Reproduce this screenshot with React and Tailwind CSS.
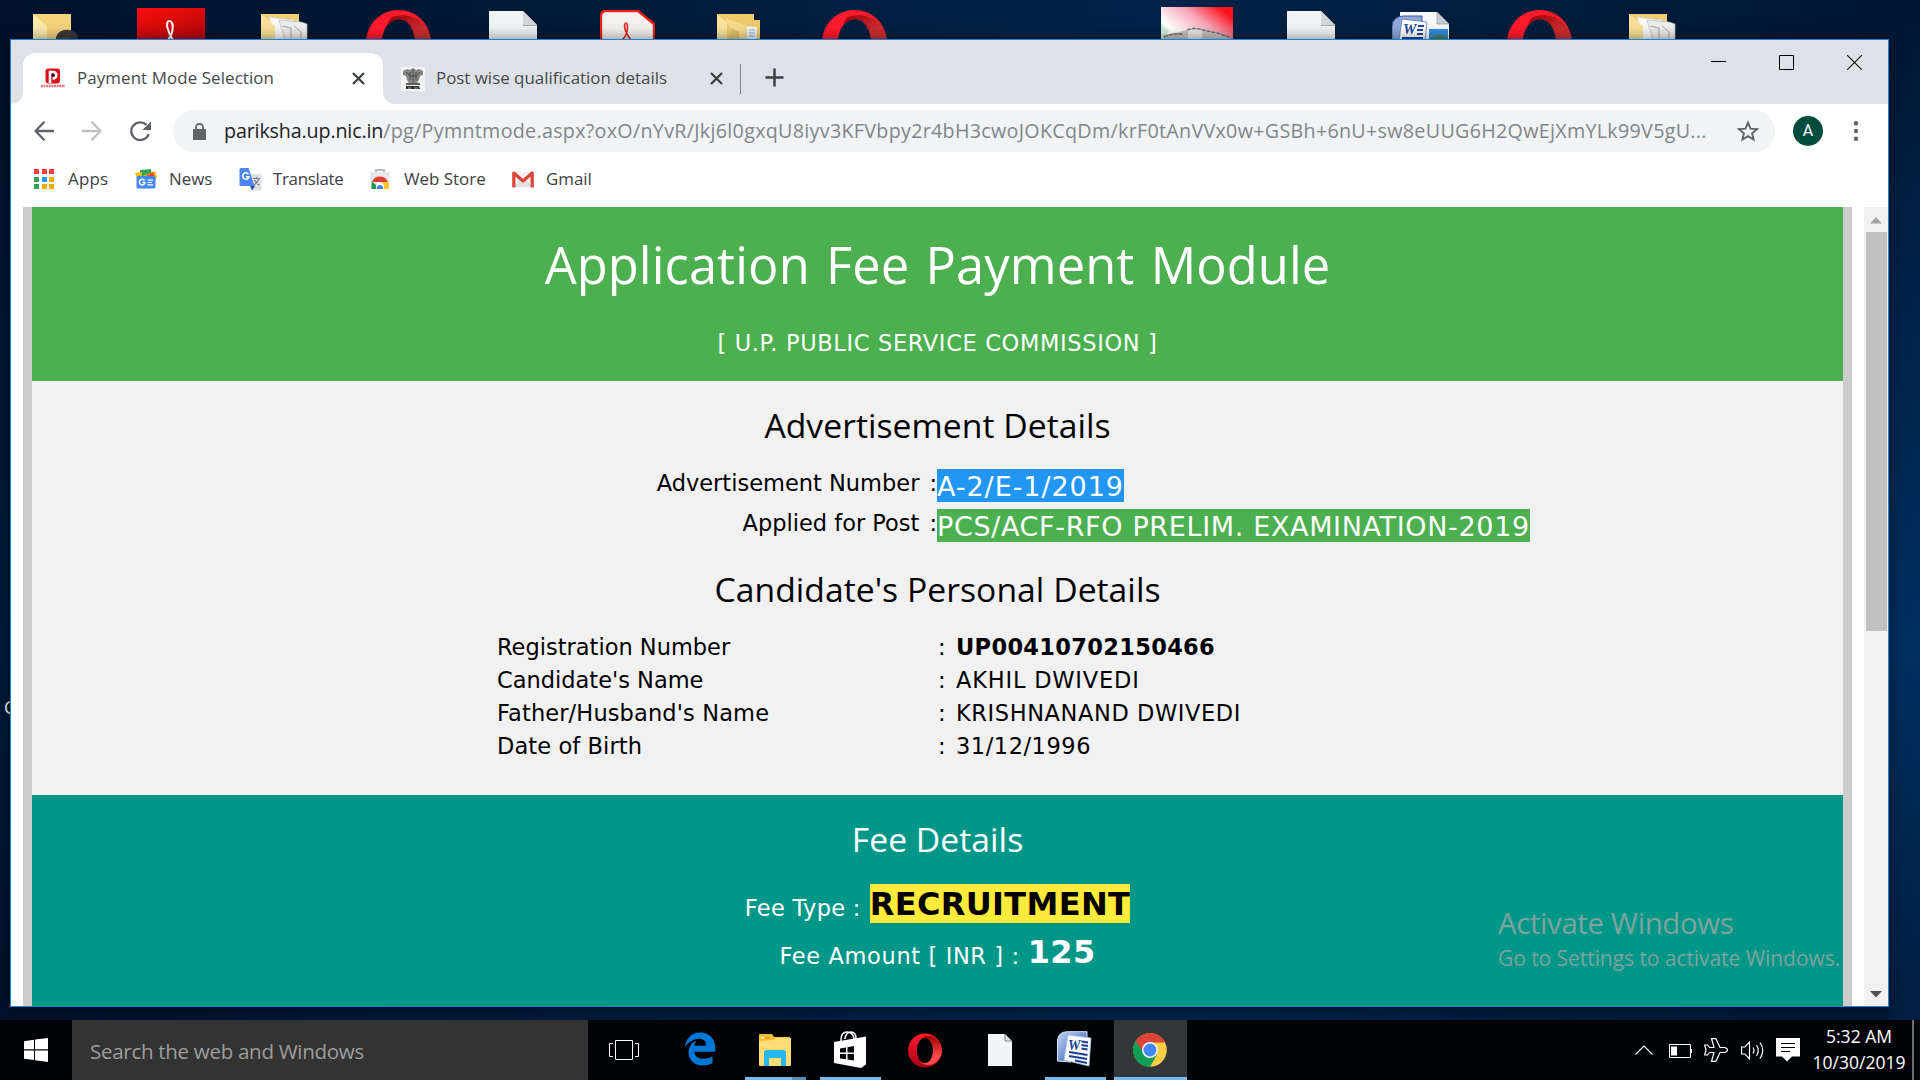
import React from "react";
import { FaEdgeLegacy } from "react-icons/fa6";

/* ---------- Desktop icons ---------- */

function OperaTop() {
  return (
    <svg width="66" height="30" viewBox="0 0 66 30">
      <defs>
        <linearGradient id="opIn" x1="0" x2="1" y1="0" y2="1">
          <stop offset="0" stopColor="#9c0000" />
          <stop offset="0.6" stopColor="#c92a2c" />
          <stop offset="1" stopColor="#d03434" />
        </linearGradient>
      </defs>
      <path d="M0 30C2 12 16 0 32.5 0S63 12 65 30H49C48 18 42 9 33 9S17 18 16 30z" fill="#ff1b2d" />
      <path d="M26 7C40 2 62 8 65 30H49C48 18 42 9 33 9C28 9 24 12 21 16C22 12 23 9 26 7z" fill="url(#opIn)" />
    </svg>
  );
}

function DocTop() {
  return (
    <svg width="48" height="30" viewBox="0 0 48 30">
      <path d="M0 0H34L48 14V30H0z" fill="#f2f3f4" />
      <path d="M34 0V14H48z" fill="#d3d5d8" />
      <path d="M34 14H48V15H34z" fill="#a9abad" />
    </svg>
  );
}

function FolderPapers() {
  return (
    <svg width="47" height="26" viewBox="0 0 47 26">
      <path d="M0 0H38V26H0z" fill="#f3cf73" />
      <path d="M8 3L33 6V26H12z" fill="#fafafa" stroke="#c9c9c9" strokeWidth=".7" />
      <path d="M18 6L40 8L46 10V26H24z" fill="#eeeeee" stroke="#bcbcbc" strokeWidth=".7" />
      <path d="M22 12L30 14V26M33 12L40 18V26" fill="none" stroke="#a5a5a5" />
      <path d="M0 0L14 12V26H0z" fill="#fbe29a" />
    </svg>
  );
}

function FolderUser() {
  return (
    <svg width="46" height="26" viewBox="0 0 46 26">
      <path d="M0 0H38V26H0z" fill="#f3d37c" />
      <path d="M0 0L14 12V26H0z" fill="#fdeaad" />
      <path d="M23 24C24 18 30 15 36 16S45 20 45 25H23z" fill="#3a3a3a" />
      <path d="M25 23L38 23L36 26H25z" fill="#5b4427" />
    </svg>
  );
}

function FolderOpen() {
  return (
    <svg width="44" height="26" viewBox="0 0 44 26">
      <path d="M0 0H37V6H43V26H0z" fill="#f0cb6b" />
      <path d="M30 12L40 13V26H30z" fill="#f1f3f5" />
      <path d="M32 16H38M32 19H38M32 22H38" stroke="#8fb1d1" />
      <path d="M0 1L10 8V26H0z" fill="#fbe4a0" />
      <path d="M8 4L30 12V26H22L14 16z" fill="#f7dc8d" />
      <path d="M14 14L22 18V26H14z" fill="#e3c468" />
    </svg>
  );
}

function AcrobatRed() {
  return (
    <svg width="68" height="32" viewBox="0 0 68 32">
      <defs>
        <linearGradient id="acr" x2="0.7" y2="1">
          <stop offset="0" stopColor="#fb0e0e" />
          <stop offset="1" stopColor="#b80707" />
        </linearGradient>
      </defs>
      <path d="M0 0H68V32H0z" fill="url(#acr)" />
      <path d="M31 32C37 25 37 13 32.5 13C28 13 30 23 36 32" fill="none" stroke="#fff" strokeWidth="2" />
    </svg>
  );
}

function PdfTop() {
  return (
    <svg width="55" height="30" viewBox="0 0 55 30">
      <path d="M1 30V6Q1 1 6 1H38L54 14V30" fill="#f4f2f1" stroke="#f02015" strokeWidth="2.4" />
      <path d="M22 30C29 24 28 13 26 13S23 20 31 30" fill="none" stroke="#e8261c" strokeWidth="1.6" />
    </svg>
  );
}

function PhotoTop() {
  return (
    <svg width="72" height="33" viewBox="0 0 72 33">
      <defs>
        <linearGradient id="pho" x1="0" y1=".6" x2="1" y2="0">
          <stop offset="0.1" stopColor="#ffffff" />
          <stop offset="0.5" stopColor="#f7a3b4" />
          <stop offset="0.85" stopColor="#fb1420" />
        </linearGradient>
      </defs>
      <path d="M0 0H72V33H0z" fill="url(#pho)" />
      <path d="M0 16L8 24L2 33H0z" fill="#d3efd9" />
      <path d="M2 33V28L14 26L26 23Q34 20 42 23L56 26L70 31V33z" fill="#c4c4c4" />
      <path d="M27 24Q34 20 41 24V33H27z" fill="#e9e9e9" />
      <path d="M3 30L12 27L22 27M26 23Q34 20 42 23L56 26L70 31" fill="none" stroke="#6a6a6a" strokeWidth="1.300" strokeDasharray="4 1" />
    </svg>
  );
}

function WordTop() {
  return (
    <svg width="58" height="28" viewBox="0 0 58 28">
      <path d="M8 0H45L57 12V28H8z" fill="#f7f9fb" />
      <path d="M45 0V12H57z" fill="#c9cdd3" stroke="#8f959c" strokeWidth=".7" />
      <path d="M37 17H56V28H37z" fill="#2f8fe0" />
      <path d="M37 28Q44 20 56 25V28z" fill="#4f8351" />
      <path d="M0 28V14Q1 4 12 4H30V28z" fill="#8ea9d8" stroke="#3c5c9e" strokeWidth="1" />
      <path d="M10 7L35 10L33 28H7z" fill="#fff" stroke="#5d7fc0" strokeWidth=".8" />
      <text x="11" y="22" fontFamily="Liberation Serif" fontStyle="italic" fontWeight="700" fontSize="15" fill="#1d4a9c">W</text>
      <path d="M26 14H32M25 18H31M25 22H31M10 26H31" stroke="#1d4a9c" strokeWidth="2" />
    </svg>
  );
}

/* ---------- Browser icons ---------- */

function TabClose() {
  return (
    <svg width="13" height="13" viewBox="0 0 13 13">
      <path d="M1 1L12 12M12 1L1 12" stroke="#3c4043" strokeWidth="2.3" />
    </svg>
  );
}

function ParikshaIcon() {
  return (
    <svg width="24" height="24" viewBox="0 0 24 24">
      <rect x="4.5" y=".5" width="14.5" height="15" rx="3" fill="#d9121c" />
      <path d="M9 15V4H12.500A3.300 3.300 0 0 1 12.500 10.500H11.500" fill="none" stroke="#fff" strokeWidth="2.600" />
      <circle cx="12" cy="7.200" r="1.600" fill="#222" />
      <path d="M0 18H24" stroke="#e0757a" strokeWidth="2.400" strokeDasharray="2 .6" />
    </svg>
  );
}

function EmblemIcon() {
  return (
    <svg width="24" height="24" viewBox="0 0 24 24">
      <path d="M0 0H24V24H0z" fill="#f4f4f4" />
      <path d="M2 4L6 2L9 3L12 1L15 3L18 2L22 4L22 8L19 9L18 13L16 16H8L6 13L5 9L2 8z" fill="#858585" />
      <path d="M5 5L8 8M19 5L16 8M12 2V15M9 5V13M15 5V13M8 9H16" stroke="#4a4a4a" strokeWidth="1" />
      <path d="M5 16H19V18H5z" fill="#5b5b5b" />
      <path d="M5 19H18L19 22H5z" fill="#2c2c2c" />
      <path d="M7 21H10M13 21H17" stroke="#aaa" strokeWidth="1" />
    </svg>
  );
}

function AppsIcon() {
  const colors = ["bg-[#f44336]", "bg-[#f44336]", "bg-[#f44336]", "bg-[#34a058]", "bg-[#2196f3]", "bg-[#fbaa00]", "bg-[#34a058]", "bg-[#fbaa00]", "bg-[#fbaa00]"];
  return (
    <div className="grid h-5 w-5 grid-cols-3 gap-[2.500px]">
      {colors.map((c, i) => (
        <span key={i} className={c} />
      ))}
    </div>
  );
}

function NewsIcon() {
  return (
    <svg width="22" height="20" viewBox="0 0 22 20">
      <path d="M5 1L16 0L17 8H5z" fill="#2fa75a" />
      <path d="M8 7L20 2L22 8L20 12z" fill="#fbbc05" />
      <path d="M9 8L18 3L20 8z" fill="#ea4335" />
      <path d="M0 4L7 3V9H2z" fill="#fbbc05" />
      <rect x="1.500" y="7" width="19" height="12.500" rx="1.500" fill="#4688f4" />
      <path d="M9.500 11.500A2.800 2.800 0 1 0 10 13.500H7.500" fill="none" stroke="#fff" strokeWidth="1.500" />
      <path d="M12.500 11.200H18M12.500 13.500H17M12.500 15.800H18" stroke="#fff" strokeWidth="1.200" />
    </svg>
  );
}

function TranslateIcon() {
  return (
    <svg width="23" height="23" viewBox="0 0 23 23">
      <path d="M9 6H21Q22.500 6 22.500 7.500V21Q22.500 22.500 21 22.500H13z" fill="#dedfe1" />
      <path d="M11 18H16L13 22.500z" fill="#2d53a8" />
      <path d="M2 0H9.500L15.500 18H2Q.5 18 .5 16.500V1.500Q.5 0 2 0z" fill="#4a86ee" />
      <path d="M9.500 6.200A3.200 3.200 0 1 0 10 8.800H6.900" fill="none" stroke="#fff" strokeWidth="1.500" />
      <path d="M14 10.500H21M17.500 9V10.500M20 10.500Q18.500 15 15 17M15.500 12Q17.500 16 20.500 17" fill="none" stroke="#767a80" strokeWidth="1.200" />
    </svg>
  );
}

function WebStoreIcon() {
  return (
    <svg width="20" height="21" viewBox="0 0 20 21">
      <path d="M6 3V1H14V3" fill="none" stroke="#b9bcbf" strokeWidth="1.800" />
      <path d="M0 3H20L19 20H1z" fill="#e4e6e8" />
      <path d="M2 13A8.500 8.500 0 0 1 18 13.500L10 13z" fill="#dc3b2d" />
      <path d="M2 12.500Q1 16 1.500 20H9L6 16z" fill="#1f9d55" />
      <path d="M11 13H18.500Q19.500 17 18.500 20H12z" fill="#fcc52b" />
      <circle cx="10" cy="17.500" r="4" fill="#fff" />
      <path d="M7 20A3.100 3.100 0 1 1 13 20z" fill="#4285f4" />
    </svg>
  );
}

function GmailIcon() {
  return (
    <svg width="22" height="17" viewBox="0 0 22 17">
      <path d="M1 1H21V16H1z" fill="#f2f2f2" />
      <path d="M1 16L8 9L11 11.500L14 9L21 16z" fill="#e1e1e1" />
      <path d="M1.800 16.500V2L11 10L20.200 2V16.500" fill="none" stroke="#dc4437" strokeWidth="3.200" strokeLinejoin="round" />
    </svg>
  );
}

function TabTitle({ children, className }) {
  return <span className={"mb-[2px] text-[16.9px] leading-6 whitespace-nowrap text-[#45494d] " + className}>{children}</span>;
}

function TabStrip() {
  return (
    <div className="flex h-16 items-end bg-[#dee1e6]">
      <div className="h-[51px] w-3 bg-white">
        <div className="h-full w-full rounded-br-xl bg-[#dee1e6]" />
      </div>
      <div className="flex h-[51px] w-[360px] items-center rounded-t-xl bg-white pr-[18px] pl-[18px]">
        <span className="mt-[2px] mr-3 flex"><ParikshaIcon /></span>
        <TabTitle className="tracking-[0.1px]">Payment Mode Selection</TabTitle>
        <span className="ml-auto flex"><TabClose /></span>
      </div>
      <div className="h-[51px] w-3 bg-white">
        <div className="h-full w-full rounded-bl-xl bg-[#dee1e6]" />
      </div>
      <div className="flex h-[51px] w-[345px] items-center pr-[17px] pl-[6px]">
        <span className="mr-[11px] flex"><EmblemIcon /></span>
        <TabTitle className="">Post wise qualification details</TabTitle>
        <span className="ml-auto flex"><TabClose /></span>
      </div>
      <div className="mb-[10px] h-[30px] w-px bg-[#808488]" />
      <svg className="mb-[17px] ml-6" width="19" height="19" viewBox="0 0 19 19">
        <path d="M9.500 .5V18.500M.5 9.500H18.500" stroke="#3c4043" strokeWidth="2.500" />
      </svg>
      <div className="mr-[26px] mb-[34px] ml-auto flex gap-[53px]">
        <svg width="15" height="15" viewBox="0 0 15 15"><path d="M0 6.500H15" stroke="#000" /></svg>
        <svg width="15" height="15" viewBox="0 0 15 15"><path d="M.5 .5H14.500V14.500H.5z" fill="none" stroke="#000" /></svg>
        <svg width="15" height="15" viewBox="0 0 15 15"><path d="M0 0L15 15M15 0L0 15" stroke="#111" strokeWidth="1.100" /></svg>
      </div>
    </div>
  );
}

function Toolbar() {
  return (
    <div className="flex h-[54px] items-center pl-[23px]">
      <svg width="20" height="20" viewBox="0 0 20 20"><path d="M10.500 .8L1.500 10L10.500 19.200M2 10H20" fill="none" stroke="#5f6368" strokeWidth="2.300" /></svg>
      <svg className="ml-7" width="20" height="20" viewBox="0 0 20 20"><path d="M9.500 .8L18.500 10L9.500 19.200M18 10H0" fill="none" stroke="#bdbfc1" strokeWidth="2.300" /></svg>
      <svg className="ml-7" width="21" height="20" viewBox="0 0 21 20">
        <path d="M18.700 13.200A9 8.800 0 1 1 16.500 3.800" fill="none" stroke="#5f6368" strokeWidth="2.300" />
        <path d="M21 .5V9H12.300z" fill="#5f6368" />
      </svg>
      <div className="ml-[22px] flex h-[42px] w-[1602px] items-center rounded-full bg-[#f1f3f4] pr-4 pl-5">
        <svg width="13" height="17" viewBox="0 0 13 17">
          <path d="M0 6H13V17H0z" fill="#5f6368" />
          <path d="M3 7V4.300A3.500 3.500 0 0 1 10 4.300V7" fill="none" stroke="#5f6368" strokeWidth="1.800" />
        </svg>
        <div className="ml-[18px] text-[19.7px] leading-7 whitespace-nowrap">
          <span className="tracking-[-0.15px] text-[#202124]">pariksha.up.nic.in</span>
          <span className="tracking-[0.3px] text-[#80868b]">/pg/Pymntmode.aspx?oxO/nYvR/Jkj6l0gxqU8iyv3KFVbpy2r4bH3cwoJOKCqDm/krF0tAnVVx0w+GSBh+6nU+sw8eUUG6H2QwEjXmYLk99V5gU...</span>
        </div>
        <svg className="ml-auto" width="22" height="22" viewBox="0 0 22 22">
          <path d="M11 2.600L13.500 8.600L20 9.100L15.100 13.300L16.600 19.600L11 16.200L5.400 19.600L6.900 13.300L2 9.100L8.500 8.600z" fill="none" stroke="#5f6368" strokeWidth="1.900" />
        </svg>
      </div>
      <div className="ml-[18px] flex h-[30px] w-[30px] items-center justify-center rounded-full bg-[#004d40] font-['Roboto'] text-[16px] leading-none text-white">
        A
      </div>
      <svg className="ml-[30px]" width="6" height="20" viewBox="0 0 6 20" fill="#5f6368">
        <circle cx="3" cy="2.300" r="2.200" /><circle cx="3" cy="10" r="2.200" /><circle cx="3" cy="17.700" r="2.200" />
      </svg>
    </div>
  );
}

function Bookmark({ icon, label, className }) {
  return (
    <div className={"flex items-center " + className}>
      <span className="flex w-[23px] justify-start">{icon}</span>
      <span className="ml-[11px] text-[16.9px] leading-6 whitespace-nowrap text-[#3c4043]">{label}</span>
    </div>
  );
}

function BookmarkBar() {
  return (
    <div className="flex h-[42px] items-center pl-[23px]">
      <Bookmark className="w-[101px] tracking-[0.2px]" icon={<AppsIcon />} label="Apps" />
      <Bookmark className="w-[104px]" icon={<NewsIcon />} label="News" />
      <Bookmark className="w-[131px] tracking-[-0.3px]" icon={<TranslateIcon />} label="Translate" />
      <Bookmark className="w-[142px]" icon={<WebStoreIcon />} label="Web Store" />
      <Bookmark className="" icon={<GmailIcon />} label="Gmail" />
    </div>
  );
}

/* ---------- Page ---------- */

function SectionTitle({ children, className }) {
  return (
    <h2 className={"text-center font-['Open_Sans',sans-serif] text-[33.7px] leading-[50px] tracking-[0.03px] " + className}>{children}</h2>
  );
}

const PERSONAL = [
  ["Registration Number", "UP00410702150466", "font-bold tracking-[0.32px]", ""],
  ["Candidate's Name", "AKHIL DWIVEDI", "tracking-[0.8px]", ""],
  ["Father/Husband's Name", "KRISHNANAND DWIVEDI", "tracking-[0.59px]", "tracking-[0.13px]"],
  ["Date of Birth", "31/12/1996", "tracking-[0.53px]", "tracking-[0.1px]"],
];

function AdRow({ label, value, className, valueClass }) {
  return (
    <div className={"flex h-[33px] " + className}>
      <span className="flex w-[905px] justify-end gap-[10px] leading-7">
        <span>{label}</span>
        <span>:</span>
      </span>
      <span className={"h-[33px] text-[27px] leading-[35px] whitespace-nowrap text-white " + valueClass}>{value}</span>
    </div>
  );
}

function PaymentPage() {
  return (
    <div className="w-[1829px] border-x-[9px] border-[#cccccc] font-['DejaVu_Sans',sans-serif] text-[22.5px]">
      <header className="h-[174px] bg-[#4caf50] pt-[25px] text-center text-white">
        <h1 className="font-['Open_Sans',sans-serif] text-[50.6px] leading-[66px] tracking-[0.1px] [word-spacing:3px]">Application Fee Payment Module</h1>
        <p className="mt-[29px] leading-8 tracking-[0.65px]">[ U.P. PUBLIC SERVICE COMMISSION ]</p>
      </header>

      <section className="h-[414px] bg-[#f1f1f1] pt-[19px] text-black">
        <SectionTitle className="">Advertisement Details</SectionTitle>
        <AdRow className="mt-[19px]" label="Advertisement Number" value="A-2/E-1/2019" valueClass="bg-[#2196f3] tracking-[0.94px]" />
        <AdRow className="mt-[7px]" label="Applied for Post" value="PCS/ACF-RFO PRELIM. EXAMINATION-2019" valueClass="bg-[#4caf50] tracking-[0.65px]" />
        <SectionTitle className="mt-[22px]">Candidate&apos;s Personal Details</SectionTitle>
        <div className="mt-[17px] pl-[465px]">
          {PERSONAL.map(([label, value, valueClass, labelClass]) => (
            <div key={label} className="flex h-[33px] leading-[33px]">
              <span className={"w-[441px] " + labelClass}>{label}</span>
              <span className="w-[18px]">:</span>
              <span className={valueClass}>{value}</span>
            </div>
          ))}
        </div>
      </section>

      <section className="h-[211px] bg-[#009688] pt-[19px] text-white">
        <SectionTitle className="">Fee Details</SectionTitle>
        <div className="mt-5 flex h-[39px] justify-center gap-[9px]">
          <span className="leading-[48px] tracking-[0.3px]">Fee Type :</span>
          <span className="h-[39px] bg-[#ffeb3b] text-[32px] leading-[41px] font-bold tracking-[0.35px] text-black">RECRUITMENT</span>
        </div>
        <div className="mt-[9px] flex h-[39px] justify-center gap-[8px]">
          <span className="leading-[48px] tracking-[0.62px]">Fee Amount [ INR ] :</span>
          <span className="text-[32px] leading-[41px] font-bold tracking-[0.3px]">125</span>
        </div>
      </section>
    </div>
  );
}

function Scrollbar() {
  return (
    <div className="ml-3 flex flex-1 flex-col items-center bg-[#f1f1f1]">
      <svg className="mt-[10px]" width="12" height="7" viewBox="0 0 12 7"><path d="M6 0L12 6.500H0z" fill="#a3a3a3" /></svg>
      <div className="mt-2 h-[399px] w-[21px] bg-[#c1c1c1]" />
      <svg className="mt-auto mb-[8px]" width="12" height="7" viewBox="0 0 12 7"><path d="M6 6.500L12 0H0z" fill="#505050" /></svg>
    </div>
  );
}

/* ---------- Taskbar ---------- */

function ExplorerIcon() {
  return (
    <svg width="32" height="33" viewBox="0 0 32 33">
      <path d="M0 1Q0 0 1 0H13L15 3H31V9H0z" fill="#f5bf35" />
      <path d="M2 3H5V4.500H2z" fill="#fff" /><path d="M6 3H10V4.500H6z" fill="#e59a13" />
      <path d="M0 7L15 6L17 4H32V31Q32 32 31 32H1Q0 32 0 31z" fill="#fedc76" />
      <path d="M5 19Q5 16 8 16H24Q27 16 27 19V32H22V24H10V32H5z" fill="#23b8ee" />
    </svg>
  );
}

function StoreIcon() {
  return (
    <svg width="33" height="37" viewBox="0 0 33 37">
      <path d="M7 12V9Q7 1 13 1T20 8V9M11 8Q12 1 17 1T22 8" fill="none" stroke="#fff" strokeWidth="1.500" />
      <path d="M0 11L32 5.500V33.500L27 37L0 32z" fill="#fff" />
      <path d="M6 17.500L12 16.500V21.500H6zM13.500 16.200L20 15V21.500H13.500zM6 23H12V28.300L6 27.500zM13.500 23H20V29.500L13.500 28.500z" fill="#05070b" />
    </svg>
  );
}

function OperaIcon() {
  return (
    <svg width="34" height="35" viewBox="0 0 34 35">
      <defs>
        <linearGradient id="opA" x1="0" y1="0" x2="0" y2="1"><stop offset="0" stopColor="#ff1b2d" /><stop offset="1" stopColor="#a70014" /></linearGradient>
        <linearGradient id="opB" x1="0" y1="0" x2="0" y2="1"><stop offset="0" stopColor="#9c0000" /><stop offset="0.7" stopColor="#ff4b4b" /></linearGradient>
      </defs>
      <path fillRule="evenodd" d="M17 .5A17 17 0 1 0 17 34.500A17 17 0 1 0 17 .5zM17 5C22 5 25 11 25 17.500S22 30 17 30S9 24 9 17.500S12 5 17 5z" fill="url(#opA)" />
      <path d="M12 6.500C19 -1 33 4 34 17.500C33 31 19 36 12 28.500C14 29.700 15.500 30 17 30C22 30 25 24 25 17.500S22 5 17 5C15.500 5 14 5.300 12 6.500z" fill="url(#opB)" />
    </svg>
  );
}

function WordIcon() {
  return (
    <svg width="35" height="36" viewBox="0 0 35 36">
      <defs><linearGradient id="wd" x2="1" y2="1"><stop offset="0" stopColor="#c5d6f2" /><stop offset=".5" stopColor="#6f93d0" /><stop offset="1" stopColor="#2a4f9c" /></linearGradient></defs>
      <path d="M.5 30V10Q1 1 10 .7H30V8L14 31z" fill="url(#wd)" stroke="#dbe5f7" strokeWidth="1" />
      <path d="M11 4L34 7L32 35L7 29z" fill="#f7faff" stroke="#a9bfe3" strokeWidth=".8" />
      <text x="11" y="19" fontFamily="Liberation Serif" fontStyle="italic" fontWeight="700" fontSize="14" fill="#1d3f8f">W</text>
      <path d="M24.500 10.500L31 11.500M24.500 14L31 15M24.500 17.500L30.500 18.500M12 21L30.500 24M12 25L30 28M18 29.500L30 32" stroke="#1d3f8f" strokeWidth="1.900" />
    </svg>
  );
}

function ChromeIcon() {
  return (
    <svg width="34" height="34" viewBox="0 0 34 34">
      <circle cx="17" cy="17" r="16.800" fill="#ffcd40" />
      <path d="M2.300 8.500A17 17 0 0 0 17 34L24.300 21H17z" fill="#0f9d58" />
      <path d="M2.300 8.500A17 17 0 0 1 31.700 8.500H32V9.500H17L10 14z" fill="#db4437" />
      <path d="M2.300 8.500L9.700 21.200L11 13z" fill="#0f9d58" />
      <path d="M3 8L10.500 20L12 11z" fill="#db4437" />
      <circle cx="17" cy="17" r="8" fill="#f1f1f1" />
      <circle cx="17" cy="17" r="6.400" fill="#4285f4" />
    </svg>
  );
}

function TaskButton({ children, className, bar }) {
  return (
    <div className={"flex h-full flex-col items-center " + className}>
      <div className="flex flex-1 items-center pt-[3px]">{children}</div>
      <div className={"h-[3px] self-stretch " + bar} />
    </div>
  );
}

function Taskbar() {
  return (
    <div className="absolute top-[1020px] left-0 flex h-[60px] w-[1920px] bg-[#010307] font-['Open_Sans',sans-serif]">
      <div className="flex w-[72px] items-center justify-center">
        <svg width="24" height="24" viewBox="0 0 24 24" fill="#fff">
          <path d="M0 3.300L10 1.800V11.300H0zM11 1.600L24 0V11.300H11zM0 12.500H10V22L0 20.700zM11 12.500H24V24L11 22.200z" />
        </svg>
      </div>
      <div className="flex w-[516px] items-center bg-[#333333] pl-[18px] text-[20.6px] leading-7 tracking-[-0.33px] text-[#9d9d9d]">
        <span className="pt-px">Search the web and Windows</span>
      </div>
      <div className="flex w-[72px] items-center justify-center">
        <svg width="30" height="20" viewBox="0 0 30 20"><path d="M6.500 .5H23.500V19.500H6.500zM4 3.500H.5V16.500H4M26 3.500H29.500V16.500H26" fill="none" stroke="#fff" /></svg>
      </div>
      <TaskButton className="ml-[2px] w-[76px]" bar="">
        <FaEdgeLegacy className="mb-[2px] h-[34px] w-[34px] text-[#0078d7]" />
      </TaskButton>
      <TaskButton className="ml-[7px] w-[61px]" bar="border-r-[14px] border-[#5a8cb4] bg-[#76b9ed]"><span className="-ml-[2px]"><ExplorerIcon /></span></TaskButton>
      <TaskButton className="ml-[14px] w-[61px]" bar="bg-[#76b9ed]"><span className="-mt-[2px]"><StoreIcon /></span></TaskButton>
      <TaskButton className="ml-[13px] w-[61px]" bar=""><span className="mt-0"><OperaIcon /></span></TaskButton>
      <TaskButton className="ml-[14px] w-[61px]" bar="">
        <svg className="-mt-px" width="24" height="32" viewBox="0 0 24 32">
          <path d="M0 0H17L24 7V32H0z" fill="#f3f4f5" /><path d="M17 0V7H24z" fill="#dfe1e3" stroke="#777" strokeWidth=".9" />
        </svg>
      </TaskButton>
      <TaskButton className="ml-[15px] w-[61px]" bar="bg-[#76b9ed]"><span className="-mt-[3px] -ml-[2px]"><WordIcon /></span></TaskButton>
      <TaskButton className="ml-2 w-[73px] bg-[#33373a]" bar="bg-[#76b9ed]"><span className="-ml-px"><ChromeIcon /></span></TaskButton>

      <div className="ml-auto flex items-center pr-[6px]">
        <svg width="18" height="10" viewBox="0 0 18 10"><path d="M.5 9.500L9 1L17.500 9.500" fill="none" stroke="#fff" strokeWidth="1.200" /></svg>
        <svg className="mt-[2px] ml-4" width="23" height="14" viewBox="0 0 23 14"><path d="M.5 .5H21.500V13.500H.5z" fill="none" stroke="#fff" /><path d="M2 2.500H8V11.500H2zM22 5H23V9H22z" fill="#fff" /></svg>
        <svg className="ml-3" width="24" height="24" viewBox="0 0 24 24">
          <path d="M7.500 .7H12L16 9.500H21Q23.500 10.500 23.500 12T21 14.500H16L12 23.300H7.500L10 14.500H5.500L3.500 17H.7L2 12L.7 7H3.500L5.500 9.500H10z" fill="none" stroke="#fff" strokeWidth="1.200" strokeLinejoin="round" />
        </svg>
        <svg className="ml-[13px]" width="23" height="19" viewBox="0 0 23 19">
          <path d="M.6 6H4L8.500 1.200V17.800L4 13H.6zM12 6.500Q14 9.500 12 12.500M15.500 4Q19 9.500 15.500 15M19 1.500Q24.500 9.500 19 17.500" fill="none" stroke="#fff" strokeWidth="1.200" />
        </svg>
        <svg className="ml-[12px]" width="24" height="24" viewBox="0 0 24 24">
          <path d="M0 0H24V18.500H16L11 23.500L6 18.500H0z" fill="#fff" /><path d="M5 5.500H19M5 9.500H19M5 13.500H14" stroke="#010307" strokeWidth="1.100" />
        </svg>
        <div className="-mt-[2px] ml-3 w-[94px] text-center text-[17.5px] leading-[26px] whitespace-nowrap text-white">
          <div>5:32 AM</div>
          <div>10/30/2019</div>
        </div>
        <div className="ml-[6px] h-[60px] w-[2px] bg-[#6d6e70]" />
      </div>
    </div>
  );
}

export default function App() {
  return (
    <div className="relative h-[1080px] w-[1920px] overflow-hidden bg-linear-to-r from-[#00122b] via-[#002347] via-60% to-[#001733] font-['Open_Sans',sans-serif]">
      <div className="absolute top-0 right-0 h-full w-[31px] bg-linear-to-b from-[#001733] via-[#003060] via-60% to-[#001b3a]" />
      <div className="absolute top-0 left-0 h-full w-[10px] bg-linear-to-b from-[#00122b] via-[#001c3a] via-60% to-[#00112a]" />

      <div className="absolute top-[14px] left-[33px]"><FolderUser /></div>
      <div className="absolute top-2 left-[137px]"><AcrobatRed /></div>
      <div className="absolute top-[14px] left-[261px]"><FolderPapers /></div>
      <div className="absolute top-[10px] left-[366px]"><OperaTop /></div>
      <div className="absolute top-[11px] left-[489px]"><DocTop /></div>
      <div className="absolute top-[10px] left-[600px]"><PdfTop /></div>
      <div className="absolute top-[14px] left-[717px]"><FolderOpen /></div>
      <div className="absolute top-[10px] left-[822px]"><OperaTop /></div>
      <div className="absolute top-[7px] left-[1161px]"><PhotoTop /></div>
      <div className="absolute top-[11px] left-[1287px]"><DocTop /></div>
      <div className="absolute top-[12px] left-[1392px]"><WordTop /></div>
      <div className="absolute top-[10px] left-[1507px]"><OperaTop /></div>
      <div className="absolute top-[14px] left-[1629px]"><FolderPapers /></div>
      <div className="absolute top-[695px] left-[4px] text-[18px] leading-6 text-white">C</div>

      <div className="absolute top-[39px] left-[10px] flex h-[968px] w-[1879px] flex-col overflow-hidden border border-[#1883d7] bg-white shadow-[0_0_14px_rgba(0,0,0,0.5)]">
        <TabStrip />
        <Toolbar />
        <BookmarkBar />
        <div className="mt-[7px] flex min-h-0 flex-1 pl-3">
          <PaymentPage />
          <Scrollbar />
        </div>
      </div>

      <div className="absolute top-[903px] left-[1498px] whitespace-nowrap text-[#7da49d]">
        <div className="text-[29.5px] leading-10 tracking-[-0.42px]">Activate Windows</div>
        <div className="mt-px text-[21.1px] leading-7 tracking-[-0.1px]">Go to Settings to activate Windows.</div>
      </div>

      <Taskbar />
    </div>
  );
}
